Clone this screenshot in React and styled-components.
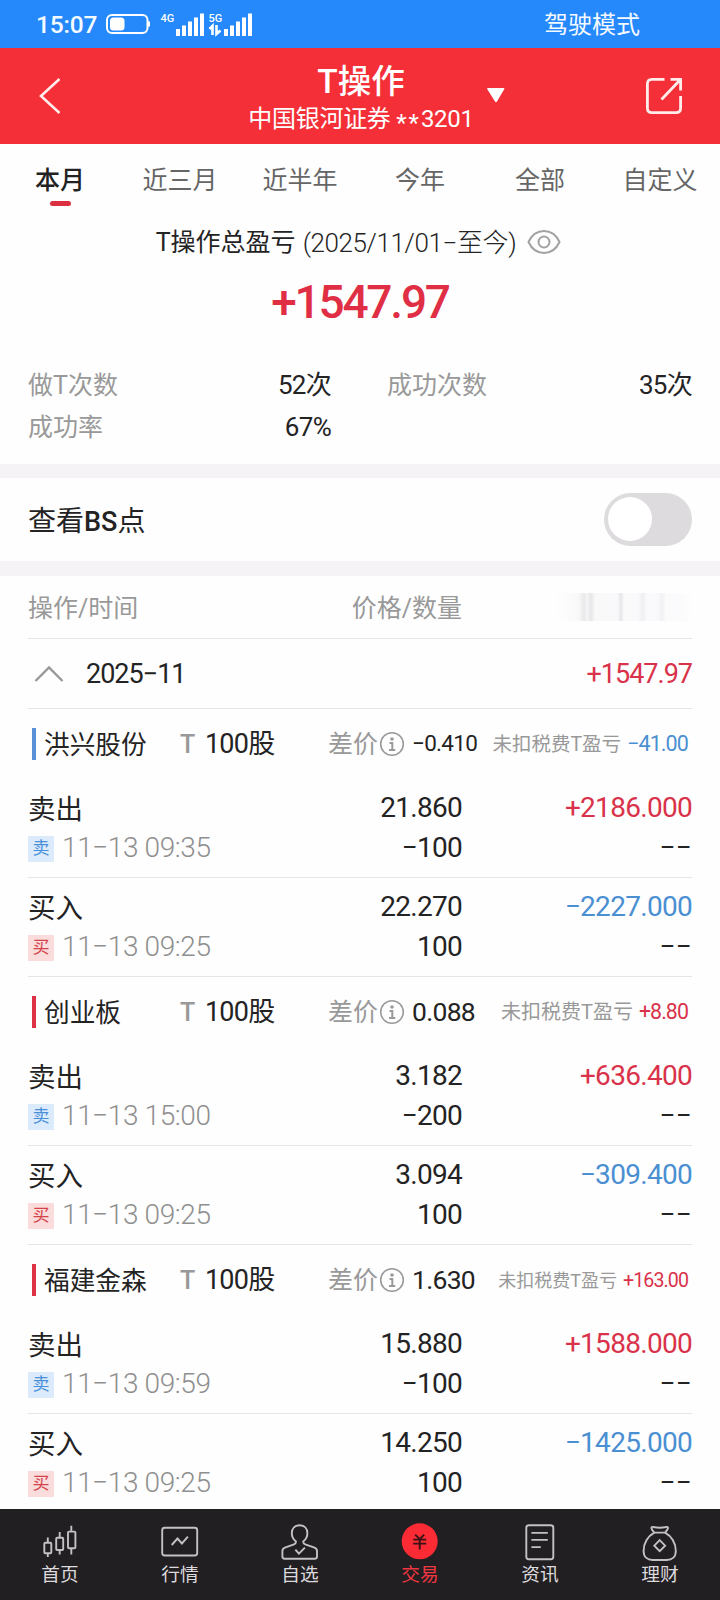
import styled, { createGlobalStyle } from 'styled-components';

const RED = '#d9324a';
const BLUE = '#4a8fd2';

const tabs = ['本月', '近三月', '近半年', '今年', '全部', '自定义'];

const groups = [
  {
    name: '洪兴股份',
    shares: '100',
    diff: '−0.410',
    diffSize: 22.5,
    profit: '−41.00',
    noteSize: 19.5,
    profitSize: 21.5,
    up: false,
    trades: [
      { side: 'sell', time: '11−13 09:35', price: '21.860', amount: '−100', total: '+2186.000' },
      { side: 'buy', time: '11−13 09:25', price: '22.270', amount: '100', total: '−2227.000' },
    ],
  },
  {
    name: '创业板',
    shares: '100',
    diff: '0.088',
    diffSize: 26.5,
    profit: '+8.80',
    noteSize: 20,
    profitSize: 21.3,
    up: true,
    trades: [
      { side: 'sell', time: '11−13 15:00', price: '3.182', amount: '−200', total: '+636.400' },
      { side: 'buy', time: '11−13 09:25', price: '3.094', amount: '100', total: '−309.400' },
    ],
  },
  {
    name: '福建金森',
    shares: '100',
    diff: '1.630',
    diffSize: 26.5,
    profit: '+163.00',
    noteSize: 18,
    profitSize: 19.6,
    up: true,
    trades: [
      { side: 'sell', time: '11−13 09:59', price: '15.880', amount: '−100', total: '+1588.000' },
      { side: 'buy', time: '11−13 09:25', price: '14.250', amount: '100', total: '−1425.000' },
    ],
  },
];

const navItems = [
  {
    label: '首页',
    icon: (
      <>
        <rect x="4.3" y="21.7" width="7" height="10.6" rx="1" />
        <path d="M7.8 16.5v5M7.8 32.5V36" />
        <rect x="16.2" y="16.8" width="7" height="12.2" rx="1" />
        <path d="M19.7 11v5.5M19.7 29v4.5" />
        <rect x="28" y="10.6" width="7.4" height="16.6" rx="1" />
        <path d="M31.3 4.8v5.5M31.3 27.5v6" />
      </>
    ),
  },
  {
    label: '行情',
    icon: (
      <>
        <rect x="2.2" y="6.7" width="35" height="27.8" rx="2.5" />
        <path d="M11.7 24l5.8-6.5 4.4 5 6-6.8" />
      </>
    ),
  },
  {
    label: '自选',
    icon: (
      <>
        <path d="M16 20.6c-2.8-2.2-4.2-5-4.2-8.3 0-4.8 3.2-8 7.8-8s7.8 3.2 7.8 8c0 3.3-1.4 6.1-4.2 8.3 0 1.6.6 2.3 2 2.8l9.3 3.2c1.8.7 2.5 1.8 2.5 3.4v5.6c0 1.5-.7 2.2-2.2 2.2H4.6c-1.5 0-2.2-.7-2.2-2.2V30c0-1.6.7-2.7 2.5-3.4l9.1-3.2c1.4-.5 2-1.2 2-2.8z" />
        <path d="M15.4 28.6l3.5 4 6-6" />
      </>
    ),
  },
  {
    label: '交易',
    active: true,
    icon: (
      <>
        <circle cx="19.7" cy="20.3" r="18" fill="#fb2b36" stroke="none" />
        <path d="M15.2 13.6l4.5 4.6 4.5-4.6M13.2 18.6h13M13.2 22.6h13M19.7 18v10.5" stroke="#3a1216" />
      </>
    ),
  },
  {
    label: '资讯',
    icon: (
      <>
        <rect x="6.3" y="4.2" width="27" height="34" rx="2.5" />
        <path d="M11.4 11.9h16.4M11.4 18.9h16.4M11.4 26.1h9.4" />
      </>
    ),
  },
  {
    label: '理财',
    icon: (
      <>
        <path d="M14.3 11.6c-1.4-1.6-2.6-3-2.9-4.3-.2-1.2.6-1.7 2-1.3 4 1 8.6 1 12.6 0 1.4-.4 2.2.1 2 1.3-.3 1.3-1.5 2.7-2.9 4.3z" />
        <path d="M14.3 11.6C8 15 3.6 22 3.6 30c0 5.8 3.6 9 9 9h14.2c5.4 0 9-3.2 9-9 0-8-4.4-15-10.7-18.4" />
        <path d="M19.7 19.2l5.4 5.5-5.4 5.5-5.4-5.5z" />
      </>
    ),
  },
];

export default function App() {
  return (
    <Page>
      <GlobalStyle />
      <StatusBar />
      <Header />
      <Tabs>
        {tabs.map((tab, i) => (
          <Tab key={tab} $active={i === 0}>
            {tab}
          </Tab>
        ))}
      </Tabs>
      <Summary />
      <Gap $height={14} />
      <SwitchRow>
        <span>
          查看<Latin>BS</Latin>点
        </span>
        <Switch role="switch" aria-checked="false">
          <Knob />
        </Switch>
      </SwitchRow>
      <Gap $height={15} />
      <List>
        <TableHead>
          <span>操作/时间</span>
          <span>价格/数量</span>
          <Redacted />
        </TableHead>
        <MonthRow>
          <svg width="30" height="18" viewBox="0 0 30 18" fill="none" stroke="#999" strokeWidth="2.4">
            <path d="M1.5 16L15 2.5 28.5 16" />
          </svg>
          <Month>2025−11</Month>
          <MonthTotal>+1547.97</MonthTotal>
        </MonthRow>
        {groups.map((group) => (
          <Group key={group.name} group={group} />
        ))}
      </List>
      <Nav>
        {navItems.map((item) => (
          <NavItem key={item.label} $active={item.active}>
            <NavIcon viewBox="0 0 40 40">{item.icon}</NavIcon>
            {item.label}
          </NavItem>
        ))}
      </Nav>
    </Page>
  );
}

function StatusBar() {
  return (
    <Status>
      <Clock>15:07</Clock>
      <svg width="146" height="26" viewBox="0 0 146 26" fill="none">
        <rect x="1" y="4" width="40.5" height="18" rx="5" stroke="#fff" strokeWidth="2" />
        <rect x="4" y="6.5" width="14.5" height="13" rx="3.5" fill="#fff" />
        <path d="M43 10.5v5" stroke="#fff" strokeWidth="2" />
        <SignalText x="54.5" y="10.5">4G</SignalText>
        <path
          d="M72 18v7M78 14.5v10.5M84 10.5v14.5M90 6.5v18.5M96 2.5v22.5"
          stroke="#fff"
          strokeWidth="4"
        />
        <SignalText x="102.5" y="10.5">5G</SignalText>
        <path d="M103.5 18l3-3v9M110.5 14v9l4-3.5" stroke="#fff" strokeWidth="2.6" />
        <path
          d="M120 18v7M126 14.5v10.5M132 10.5v14.5M138 6.5v18.5M144 2.5v22.5"
          stroke="#fff"
          strokeWidth="4"
        />
      </svg>
      <DriveMode>驾驶模式</DriveMode>
    </Status>
  );
}

function Header() {
  return (
    <Bar>
      <svg width="24" height="38" viewBox="0 0 24 38" fill="none" stroke="#ffeceb" strokeWidth="2.6">
        <path d="M20.5 2L2 19l18.5 17" />
      </svg>
      <Account>
        <TitleBlock>
          <Title>T操作</Title>
          <Subtitle>
            中国银河证券 <Mask>**</Mask>3201
          </Subtitle>
        </TitleBlock>
        <svg width="20" height="16" viewBox="0 0 20 16" fill="#fff">
          <path d="M2 0h15.5q1.5 0 .7 1.200l-7.2 12.3q-1 1.500-2 0L1.3 1.200Q.5 0 2 0z" />
        </svg>
      </Account>
      <svg width="38" height="38" viewBox="0 0 38 38" fill="none" stroke="#ffeceb" strokeWidth="2.8">
        <path d="M19.5 2.4H7q-4.6 0-4.6 4.6v24q0 4.6 4.6 4.6h24q4.6 0 4.6-4.6V19" />
        <path d="M16.5 22.5L35 3M25.5 2.4h10.1v11" />
      </svg>
    </Bar>
  );
}

function Summary() {
  return (
    <SummaryBox>
      <SummaryTitle>
        <span>T操作总盈亏</span>
        <Range>(2025/11/01−至今)</Range>
        <svg width="34" height="26" viewBox="0 0 34 26" fill="none" stroke="#a3a1a4" strokeWidth="2">
          <path d="M1.5 13C5 5.5 10.5 2 17 2s12 3.5 15.5 11C29 20.500 23.5 24 17 24S5 20.5 1.5 13z" />
          <circle cx="17" cy="13" r="5.5" />
        </svg>
      </SummaryTitle>
      <Total>+1547.97</Total>
      <Stats>
        <StatLabel>做T次数</StatLabel>
        <StatValue>52次</StatValue>
        <StatLabel>成功次数</StatLabel>
        <StatValue>35次</StatValue>
        <StatLabel>成功率</StatLabel>
        <StatValue>67%</StatValue>
      </Stats>
    </SummaryBox>
  );
}

function Group({ group }) {
  return (
    <section>
      <GroupHead>
        <Marker $up={group.up} />
        <StockName>{group.name}</StockName>
        <TradeType>T</TradeType>
        <Shares>{group.shares}股</Shares>
        <DiffLabel>差价</DiffLabel>
        <svg width="26" height="26" viewBox="0 0 26 26" fill="none" stroke="#999" strokeWidth="1.6">
          <circle cx="13" cy="13" r="11.3" />
          <circle cx="13" cy="8" r="1.8" fill="#999" stroke="none" />
          <path d="M10.5 12h2.8v7M10 19h6.2" strokeWidth="2" />
        </svg>
        <Diff $size={group.diffSize}>{group.diff}</Diff>
        <Profit $size={group.profitSize} $up={group.up}>
          <Note $size={group.noteSize}>未扣税费T盈亏</Note>
          {group.profit}
        </Profit>
      </GroupHead>
      {group.trades.map((trade) => (
        <Trade key={trade.side}>
          <Action>{trade.side === 'sell' ? '卖出' : '买入'}</Action>
          <Amount>{trade.price}</Amount>
          <Amount $color={trade.total.startsWith('+') ? RED : BLUE}>{trade.total}</Amount>
          <TimeCell>
            <Badge $side={trade.side}>{trade.side === 'sell' ? '卖' : '买'}</Badge>
            <Time>{trade.time}</Time>
          </TimeCell>
          <Amount>{trade.amount}</Amount>
          <Amount $spacing={0.4}>−−</Amount>
        </Trade>
      ))}
    </section>
  );
}

const GlobalStyle = createGlobalStyle`
  * {
    box-sizing: border-box;
  }

  body {
    margin: 0;
    background: #fefefe;
    color: #242324;
    font-family: Roboto, 'Noto Sans CJK SC', sans-serif;
  }

  svg {
    display: block;
    flex: none;
  }
`;

const Page = styled.div`
  display: flex;
  flex-direction: column;
  width: 720px;
  height: 1600px;
  overflow: hidden;
  white-space: nowrap;
`;

const Status = styled.div`
  display: flex;
  align-items: center;
  flex: none;
  height: 48px;
  padding: 0 80px 0 36px;
  background: #2689fb;
  color: #f4faff;
`;

const Clock = styled.span`
  width: 70px;
  padding-top: 1px;
  font-size: 24.5px;
  font-weight: 500;
  letter-spacing: -0.2px;
`;

const SignalText = styled.text`
  font-size: 11px;
  font-weight: 500;
  fill: #fff;
`;

const DriveMode = styled.span`
  margin-left: auto;
  padding-bottom: 3px;
  font-size: 24px;
`;

const Bar = styled.header`
  display: flex;
  align-items: center;
  flex: none;
  height: 96px;
  padding: 0 37px 0 39px;
  background: #f42f38;
  color: #fff;
`;

const Account = styled.div`
  display: flex;
  align-items: center;
  gap: 14px;
  margin: 0 auto 0 187px;
`;

const TitleBlock = styled.div`
  display: flex;
  flex-direction: column;
  align-items: center;
  width: 222px;
  padding-top: 5px;
`;

const Title = styled.h1`
  margin: 0;
  font-size: 33.5px;
  font-weight: 500;
  line-height: 40px;
`;

const Subtitle = styled.div`
  font-size: 24px;
  line-height: 34px;
  letter-spacing: -0.3px;
`;

const Mask = styled.span`
  vertical-align: -4px;
  line-height: 1;
  letter-spacing: 2px;
`;

const Tabs = styled.nav`
  display: grid;
  grid-template-columns: repeat(6, 1fr);
  flex: none;
  height: 72px;
`;

const Tab = styled.div`
  display: flex;
  flex-direction: column;
  align-items: center;
  padding-top: 19px;
  font-size: 25px;
  font-weight: ${(props) => (props.$active ? 500 : 400)};
  line-height: 36px;
  color: ${(props) => (props.$active ? '#222' : '#666')};

  &::after {
    content: '';
    width: 21px;
    height: 5px;
    margin-top: 2px;
    border-radius: 3px;
    background: ${(props) => (props.$active ? '#dc3040' : 'transparent')};
  }
`;

const SummaryBox = styled.section`
  flex: none;
  height: 248px;
`;

const SummaryTitle = styled.div`
  display: flex;
  align-items: center;
  justify-content: center;
  height: 52px;
  padding-right: 3px;
  font-size: 25px;

  span {
    padding-bottom: 4px;
  }

  svg {
    margin-left: 11px;
  }
`;

const Range = styled.span`
  margin-left: 7px;
  font-size: 26px;
  font-weight: 300;
  letter-spacing: -0.4px;
`;

const Total = styled.div`
  height: 68px;
  color: #e02f45;
  font-size: 46px;
  font-weight: 500;
  line-height: 68px;
  letter-spacing: -2.2px;
  text-align: center;
`;

const Stats = styled.div`
  display: grid;
  grid-template-columns: 150px 153px 247px 114px;
  grid-auto-rows: 42px;
  padding: 28px 28px 0;
  line-height: 42px;

  > :nth-child(3) {
    padding-left: 56px;
  }
`;

const StatLabel = styled.span`
  padding-top: 1px;
  color: #999;
  font-size: 25px;
`;

const StatValue = styled.span`
  font-size: 26px;
  text-align: right;
  letter-spacing: -0.7px;
`;

const Gap = styled.div`
  flex: none;
  height: ${(props) => props.$height}px;
  background: #f5f3f6;
`;

const SwitchRow = styled.div`
  display: flex;
  align-items: center;
  justify-content: space-between;
  flex: none;
  height: 83px;
  padding: 0 28px;
  font-size: 28px;

  > span {
    padding-bottom: 2px;
  }
`;

const Latin = styled.b`
  font-size: 27px;
  font-weight: 500;
`;

const Switch = styled.div`
  width: 88px;
  height: 53px;
  padding: 4px;
  border-radius: 27px;
  background: #dedbdf;
`;

const Knob = styled.div`
  width: 44px;
  height: 44px;
  border-radius: 50%;
  background: #fff;
`;

const List = styled.main`
  flex: 1;
  min-height: 0;
  overflow: hidden;
  padding: 0 28px;
`;

const TableHead = styled.div`
  display: grid;
  grid-template-columns: 234px 200px 230px;
  align-items: center;
  height: 63px;
  border-bottom: 1px solid #e6e5e7;
  color: #999;
  font-size: 25px;

  > span {
    padding-bottom: 2px;
  }

  > :nth-child(2) {
    text-align: right;
  }
`;

const Redacted = styled.div`
  justify-self: end;
  width: 138px;
  height: 28px;
  background: linear-gradient(
    90deg,
    #fefefe 0,
    #fcfbfc 16px,
    #faf9fa 24px,
    #f3f2f3 27px,
    #e8e7e9 30px,
    #f6f5f6 33px,
    #e6e5e7 37px,
    #faf9fa 41px,
    #f9f8fa 62px,
    #f7f6f8 64px,
    #e6e5e7 67px,
    #fbfafb 70px,
    #f9f8fa 84px,
    #efeef0 89px,
    #faf9fb 93px,
    #f9f8fa 104px,
    #f1f0f2 108px,
    #fcfbfc 112px,
    #fbfafc 126px,
    #fefefe 138px
  );
`;

const MonthRow = styled.div`
  display: flex;
  align-items: center;
  height: 70px;
  padding-left: 6px;
  border-bottom: 1px solid #e6e5e7;
  font-size: 27px;
  letter-spacing: -1px;
`;

const Month = styled.span`
  margin-left: 22px;
`;

const MonthTotal = styled.span`
  margin-left: auto;
  color: ${RED};
`;

const GroupHead = styled.div`
  display: flex;
  align-items: center;
  height: 70px;
  padding: 0 4px;
`;

const Marker = styled.i`
  width: 4px;
  height: 32px;
  background: ${(props) => (props.$up ? '#dc3246' : '#5b8fd6')};
`;

const StockName = styled.span`
  width: 136px;
  margin-left: 8px;
  padding-bottom: 3px;
  font-size: 25.7px;
`;

const TradeType = styled.span`
  width: 25px;
  color: #999;
  font-size: 25px;
  font-weight: 500;
`;

const Shares = styled.span`
  width: 123px;
  padding-bottom: 5px;
  font-size: 27px;
  letter-spacing: -0.8px;
`;

const DiffLabel = styled.span`
  width: 51px;
  padding-bottom: 4px;
  color: #999;
  font-size: 25px;
`;

const Diff = styled.span`
  margin-left: 7px;
  padding-bottom: 2px;
  font-size: ${(props) => props.$size}px;
  letter-spacing: -0.7px;
`;

const Profit = styled.span`
  margin-left: auto;
  padding-bottom: 3px;
  color: ${(props) => (props.$up ? RED : BLUE)};
  font-size: ${(props) => props.$size}px;
  letter-spacing: -0.9px;
`;

const Note = styled.span`
  margin-right: 6px;
  color: #999;
  font-size: ${(props) => props.$size}px;
  letter-spacing: 0;
`;

const Trade = styled.div`
  display: grid;
  grid-template-columns: 234px 200px 230px;
  grid-template-rows: 40px 40px;
  height: 99px;
  padding-top: 9px;
  border-bottom: 1px solid #e6e5e7;
  line-height: 40px;
`;

const Action = styled.span`
  padding-top: 2px;
  font-size: 27.5px;
`;

const Amount = styled.span`
  color: ${(props) => props.$color || 'inherit'};
  font-size: 28px;
  letter-spacing: ${(props) => props.$spacing || -0.7}px;
  text-align: right;
`;

const TimeCell = styled.div`
  display: flex;
  align-items: center;
`;

const Badge = styled.span`
  width: 26px;
  height: 26px;
  margin-top: 1px;
  font-size: 17px;
  line-height: 25px;
  text-align: center;
  color: ${(props) => (props.$side === 'sell' ? '#4a90d9' : '#d5424a')};
  background: ${(props) => (props.$side === 'sell' ? '#dcebfb' : '#fbdcdc')};
`;

const Time = styled.span`
  margin-left: 8px;
  color: #8f8f8f;
  font-size: 28px;
  font-weight: 300;
  letter-spacing: -0.4px;
`;

const Nav = styled.nav`
  display: grid;
  grid-template-columns: repeat(6, 1fr);
  flex: none;
  height: 91px;
  background: #211f22;
`;

const NavItem = styled.div`
  display: flex;
  flex-direction: column;
  align-items: center;
  padding-top: 12px;
  color: ${(props) => (props.$active ? '#f03640' : '#dddadd')};
  font-size: 18.7px;
  line-height: 28px;
`;

const NavIcon = styled.svg`
  width: 40px;
  height: 40px;
  fill: none;
  stroke: #c4c1c4;
  stroke-width: 1.9;
`;
